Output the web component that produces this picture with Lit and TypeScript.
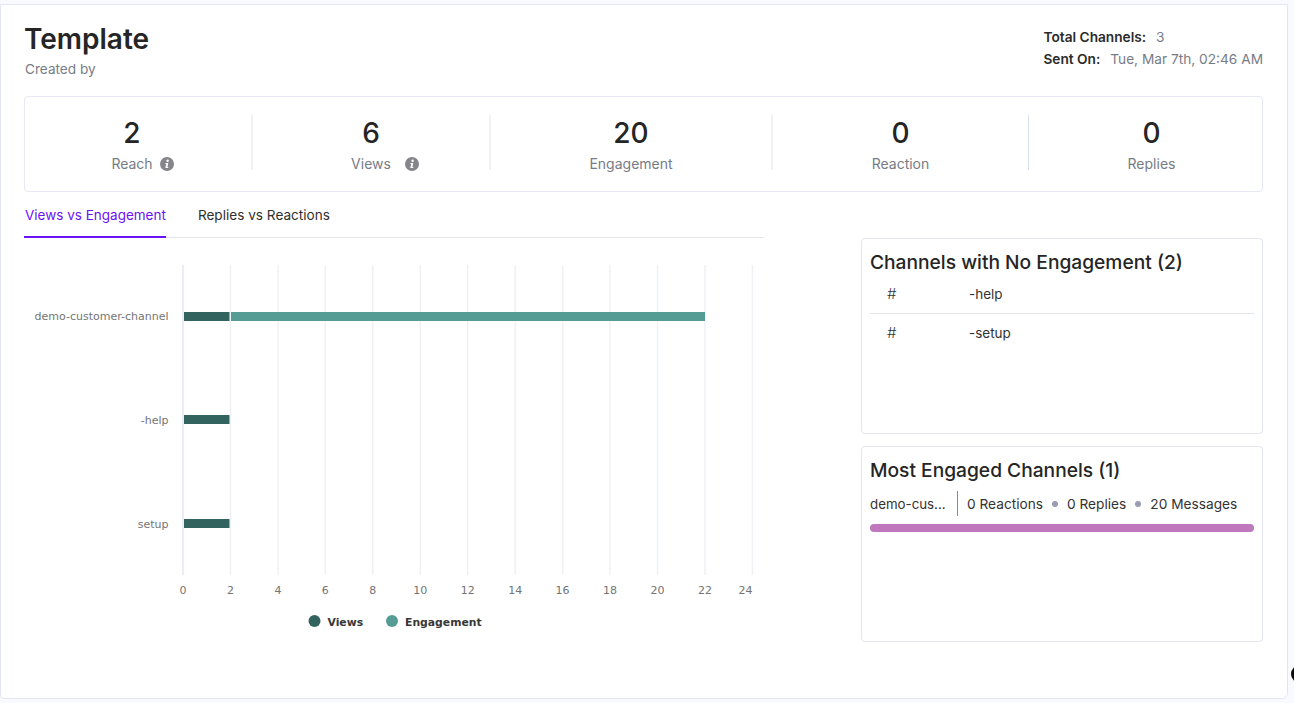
import { LitElement, html, css, svg } from "lit";
import { customElement } from "lit/decorators.js";

const infoIcon = html`<svg class="info" viewBox="0 0 14 14" width="14" height="14" aria-hidden="true">
  <circle cx="7" cy="7" r="7" fill="#85858b"></circle>
  <circle cx="7.6" cy="3.7" r="1.2" fill="#fff"></circle>
  <path d="M5.5 6h2.8l-.9 4h.9v1H5.3l.9-4h-.9z" fill="#fff"></path>
</svg>`;

const X0 = 183;
const STEP = 47.45;
const ticks = Array.from({ length: 13 }, (_, i) => i * 2);
const xAt = (v: number) => X0 + (v / 2) * STEP;

const chart = svg`
  ${ticks.map((v) => svg`<line x1=${xAt(v)} x2=${xAt(v)} y1="265" y2="575" stroke=${v === 0 ? "#e3e6f5" : "#f0f1f5"} stroke-width="1.500"></line>`)}
  <rect x="184" y="312" width="45.500" height="9" fill="#33635f"></rect>
  <rect x="231" y="312" width="474" height="9" fill="#559c94"></rect>
  <rect x="184" y="415" width="45.500" height="9" fill="#33635f"></rect>
  <rect x="184" y="519" width="45.500" height="9" fill="#33635f"></rect>
  <g class="cat" text-anchor="end">
    <text x="168.500" y="320">demo-customer-channel</text>
    <text x="168.500" y="424">-help</text>
    <text x="168.500" y="528">setup</text>
  </g>
  <g class="tick" text-anchor="middle">
    ${ticks.map((v) => svg`<text x=${v === 24 ? 745.5 : xAt(v)} y="594">${v}</text>`)}
  </g>
  <circle cx="314.500" cy="621" r="6" fill="#33635f"></circle>
  <text class="legend" x="327.500" y="625.500">Views</text>
  <circle cx="392" cy="621" r="6" fill="#559c94"></circle>
  <text class="legend" x="405" y="625.500">Engagement</text>
`;

@customElement("app-root")
export class AppRoot extends LitElement {
  static styles = css`
    :host {
      display: block;
      height: 703px;
      box-sizing: border-box;
      padding: 4px 6px 4px 0;
      background: #f9faff;
      font-family: Inter, "Noto Sans", sans-serif;
      color: #252525;
      overflow: hidden;
      position: relative;
    }
    .card {
      height: 695px;
      box-sizing: border-box;
      background: #fff;
      border: 1px solid #e3e6f2;
      border-radius: 0 0 6px 4px;
      padding: 0 24px 0 23px;
    }
    .head {
      display: flex;
      justify-content: space-between;
      height: 91px;
    }
    h1 {
      margin: 16px 0 0;
      font-size: 28px;
      line-height: 36px;
      font-weight: 600;
    }
    .by {
      margin-top: 2px;
      padding-left: 1px;
      font-size: 13.6px;
      line-height: 20px;
      color: #777c87;
    }
    .meta {
      margin-top: 21px;
      font-size: 13.7px;
      line-height: 22px;
      color: #777c87;
    }
    .meta b {
      font-weight: 600;
      color: #2b2b2b;
      margin-right: 6px;
    }
    .stats {
      display: grid;
      grid-template-columns: 228px 238px 282px 256px 1fr;
      grid-template-rows: 55px;
      height: 96px;
      box-sizing: border-box;
      padding: 18px 0 20px;
      border: 1px solid #e6e9f4;
      border-radius: 4px;
    }
    .stat {
      display: flex;
      flex-direction: column;
      align-items: center;
      border-right: 2px solid #eef1f6;
    }
    .stat:first-child { padding-right: 12px; }
    .stat:nth-child(4) { border-right: 1px solid #d8dfee; }
    .stat:last-child { border-right: 0; margin-left: 12px; }
    .num {
      font-size: 28px;
      line-height: 36px;
      font-weight: 500;
    }
    .lbl {
      display: flex;
      align-items: center;
      margin-top: 3px;
      font-size: 14px;
      line-height: 20px;
      color: #777c87;
    }
    .info { flex: none; }
    .reach .info { margin-left: 7px; margin-right: -21px; }
    .views .info { margin-left: 14px; margin-right: -28px; }
    .tabs {
      display: flex;
      gap: 32px;
      width: 739px;
      height: 46px;
      box-sizing: border-box;
      border-bottom: 1px solid #e3e3ee;
      font-size: 13.6px;
    }
    .tab {
      height: 46px;
      box-sizing: border-box;
      padding-top: 13px;
      line-height: 20px;
      color: #2f2f2f;
    }
    .tab.on {
      padding-left: 1px;
      font-size: 13.5px;
      color: #6a11f5;
      border-bottom: 2px solid #6a11f5;
    }
    .body {
      display: flex;
      justify-content: flex-end;
    }
    .plot {
      flex: 1;
      height: 0;
    }
    .plot svg {
      display: block;
      margin-left: -24px;
      overflow: visible;
    }
    .cat text, .tick text {
      font-family: "DejaVu Sans", sans-serif;
      font-size: 11px;
      fill: #747474;
    }
    .legend {
      font-family: "DejaVu Sans", sans-serif;
      font-size: 10.8px;
      font-weight: 700;
      fill: #373737;
    }
    .side {
      width: 402px;
      display: flex;
      flex-direction: column;
      gap: 12px;
    }
    .panel {
      height: 196px;
      box-sizing: border-box;
      padding: 0 8px;
      border: 1px solid #e3e6f2;
      border-radius: 4px;
    }
    h2 {
      margin: 10px 0 0;
      font-size: 19.2px;
      line-height: 26px;
      font-weight: 500;
      color: #252525;
    }
    .row {
      display: grid;
      grid-template-columns: 82px 1fr;
      height: 38px;
      box-sizing: border-box;
      padding: 9px 0 0 17px;
      font-size: 13.5px;
      line-height: 20px;
      color: #333;
    }
    .row + .row { border-top: 1px solid #e3e6ee; }
    .hash { font-size: 15px; font-weight: 300; }
    .engaged {
      display: flex;
      align-items: center;
      height: 27px;
      margin-top: 7px;
      font-size: 13.7px;
      color: #333;
    }
    .name {
      width: 88px;
      height: 25px;
      font-size: 13.3px;
      line-height: 27px;
      border-right: 1px solid #7f8a9c;
      box-sizing: border-box;
      margin-right: 9px;
    }
    .dot {
      width: 6px;
      height: 6px;
      margin: 0 9px;
      border-radius: 50%;
      background: #9a9caf;
    }
    .bar {
      height: 8px;
      margin-top: 7px;
      border-radius: 4px;
      background: #bf78bb;
    }
    .blob {
      position: absolute;
      left: 1291px;
      top: 665px;
      width: 18px;
      height: 18px;
      border-radius: 50%;
      background: #0b0b0b;
    }
  `;

  render() {
    return html`
      <div class="card">
        <div class="head">
          <div>
            <h1>Template</h1>
            <div class="by">Created by</div>
          </div>
          <div class="meta">
            <div><b>Total Channels:</b> 3</div>
            <div><b>Sent On:</b> Tue, Mar 7th, 02:46 AM</div>
          </div>
        </div>
        <div class="stats">
          <div class="stat reach"><div class="num">2</div><div class="lbl">Reach${infoIcon}</div></div>
          <div class="stat views"><div class="num">6</div><div class="lbl">Views${infoIcon}</div></div>
          <div class="stat"><div class="num">20</div><div class="lbl">Engagement</div></div>
          <div class="stat"><div class="num">0</div><div class="lbl">Reaction</div></div>
          <div class="stat"><div class="num">0</div><div class="lbl">Replies</div></div>
        </div>
        <div class="tabs">
          <div class="tab on">Views vs Engagement</div>
          <div class="tab">Replies vs Reactions</div>
        </div>
        <div class="body">
          <div class="plot">
            <svg width="800" height="410" viewBox="0 238 800 410">${chart}</svg>
          </div>
          <div class="side">
            <section class="panel">
              <h2>Channels with No Engagement (2)</h2>
              <div class="row"><span class="hash">#</span><span>-help</span></div>
              <div class="row"><span class="hash">#</span><span>-setup</span></div>
            </section>
            <section class="panel">
              <h2>Most Engaged Channels (1)</h2>
              <div class="engaged">
                <span class="name">demo-cus...</span>
                <span>0 Reactions</span><i class="dot"></i>
                <span>0 Replies</span><i class="dot"></i>
                <span>20 Messages</span>
              </div>
              <div class="bar"></div>
            </section>
          </div>
        </div>
      </div>
      <div class="blob"></div>
    `;
  }
}
